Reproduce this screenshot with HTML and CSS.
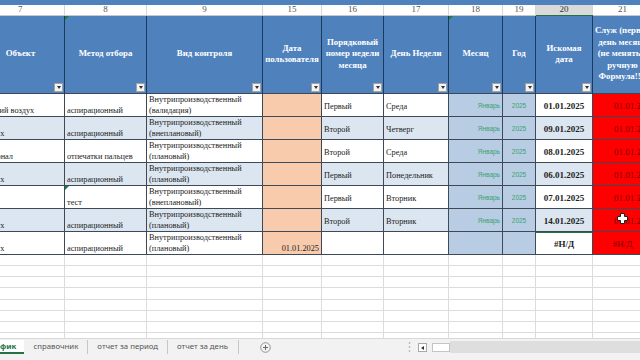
FILE: index.html
```html
<!DOCTYPE html>
<html lang="ru">
<head>
    <meta charset="UTF-8">
    <title>График</title>
    <link rel="stylesheet" href="styles.css">
</head>
<body>
    <div class="sheet">
        <div class="strip"></div>
        <table class="grid">
            <colgroup>
                <col class="w7"><col class="w8"><col class="w9"><col class="w15"><col class="w16">
                <col class="w17"><col class="w18"><col class="w19"><col class="w20"><col class="w21">
            </colgroup>
            <tr class="nums">
                <td>7</td><td>8</td><td>9</td><td>15</td><td>16</td>
                <td>17</td><td>18</td><td>19</td><td class="sel">20</td><td>21</td>
            </tr>
            <tr class="head">
                <th>Объект<span class="filter"></span></th>
                <th class="flag">Метод отбора<span class="filter"></span></th>
                <th>Вид контроля<span class="filter"></span></th>
                <th>Дата<br>пользователя<span class="filter"></span></th>
                <th>Порядковый<br>номер недели<br>месяца<span class="filter"></span></th>
                <th>День Недели<span class="filter"></span></th>
                <th class="flag">Месяц<span class="filter"></span></th>
                <th>Год<span class="filter"></span></th>
                <th>Искомая<br>дата<span class="filter"></span></th>
                <th>Служ (первый<br>день месяца<br>(не менять в<br>ручную<br>Формула!!!)</th>
            </tr>
            <tr class="row">
                <td>Рабочий воздух</td>
                <td>аспирационный</td>
                <td>Внутрипроизводственный<br>(валидация)</td>
                <td class="user"></td>
                <td class="mid">Первый</td>
                <td class="mid">Среда</td>
                <td class="month">Январь</td>
                <td class="year">2025</td>
                <td class="found">01.01.2025</td>
                <td class="serv">01.01.2025</td>
            </tr>
            <tr class="row alt">
                <td>Воздух</td>
                <td>аспирационный</td>
                <td>Внутрипроизводственный<br>(внеплановый)</td>
                <td class="user"></td>
                <td class="mid">Второй</td>
                <td class="mid">Четверг</td>
                <td class="month">Январь</td>
                <td class="year">2025</td>
                <td class="found">09.01.2025</td>
                <td class="serv">01.01.2025</td>
            </tr>
            <tr class="row">
                <td>Персонал</td>
                <td>отпечатки пальцев</td>
                <td>Внутрипроизводственный<br>(плановый)</td>
                <td class="user"></td>
                <td class="mid">Второй</td>
                <td class="mid">Среда</td>
                <td class="month">Январь</td>
                <td class="year">2025</td>
                <td class="found">08.01.2025</td>
                <td class="serv">01.01.2025</td>
            </tr>
            <tr class="row alt">
                <td>Воздух</td>
                <td>аспирационный</td>
                <td>Внутрипроизводственный<br>(плановый)</td>
                <td class="user"></td>
                <td class="mid">Первый</td>
                <td class="mid">Понедельник</td>
                <td class="month">Январь</td>
                <td class="year">2025</td>
                <td class="found">06.01.2025</td>
                <td class="serv">01.01.2025</td>
            </tr>
            <tr class="row">
                <td></td>
                <td class="flag">тест</td>
                <td>Внутрипроизводственный<br>(внеплановый)</td>
                <td class="user"></td>
                <td class="mid">Первый</td>
                <td class="mid">Вторник</td>
                <td class="month">Январь</td>
                <td class="year">2025</td>
                <td class="found">07.01.2025</td>
                <td class="serv">01.01.2025</td>
            </tr>
            <tr class="row alt">
                <td>Воздух</td>
                <td>аспирационный</td>
                <td>Внутрипроизводственный<br>(плановый)</td>
                <td class="user"></td>
                <td class="mid">Второй</td>
                <td class="mid">Вторник</td>
                <td class="month">Январь</td>
                <td class="year">2025</td>
                <td class="found">14.01.2025</td>
                <td class="serv">01.01.2025</td>
            </tr>
            <tr class="row">
                <td>Воздух</td>
                <td>аспирационный</td>
                <td>Внутрипроизводственный<br>(плановый)</td>
                <td class="user">01.01.2025</td>
                <td class="mid"></td>
                <td class="mid"></td>
                <td class="month"></td>
                <td class="year"></td>
                <td class="found active">#Н/Д</td>
                <td class="serv na">#Н/Д</td>
            </tr>
            <tr class="empty"><td></td><td></td><td></td><td></td><td></td><td></td><td></td><td></td><td></td><td></td></tr>
            <tr class="empty"><td></td><td></td><td></td><td></td><td></td><td></td><td></td><td></td><td></td><td></td></tr>
            <tr class="empty"><td></td><td></td><td></td><td></td><td></td><td></td><td></td><td></td><td></td><td></td></tr>
            <tr class="empty"><td></td><td></td><td></td><td></td><td></td><td></td><td></td><td></td><td></td><td></td></tr>
            <tr class="empty"><td></td><td></td><td></td><td></td><td></td><td></td><td></td><td></td><td></td><td></td></tr>
            <tr class="empty"><td></td><td></td><td></td><td></td><td></td><td></td><td></td><td></td><td></td><td></td></tr>
            <tr class="empty"><td></td><td></td><td></td><td></td><td></td><td></td><td></td><td></td><td></td><td></td></tr>
            <tr class="empty"><td></td><td></td><td></td><td></td><td></td><td></td><td></td><td></td><td></td><td></td></tr>
        </table>

        <!-- excel cell cursor -->
        <svg class="cursor" width="11" height="11" viewBox="0 0 11 11">
            <path d="M3.5 0.5h4v3h3v4h-3v3h-4v-3h-3v-4h3z" fill="#fff" stroke="#222" stroke-width="1"/>
        </svg>
    </div>

    <div class="tabbar">
        <div class="tabs">
            <span class="tab active">фик</span>
            <span class="tab">справочник</span>
            <span class="tab">отчет за период</span>
            <span class="tab">отчет за день</span>
            <svg class="add" width="11" height="11" viewBox="0 0 11 11">
                <circle cx="5.5" cy="5.5" r="4.8" fill="none" stroke="#8a8a8a" stroke-width="0.9"/>
                <path d="M5.5 3v5M3 5.5h5" stroke="#6a6a6a" stroke-width="1"/>
            </svg>
        </div>
        <div class="hscroll">
            <svg class="dots" width="3" height="12" viewBox="0 0 3 12">
                <circle cx="1.5" cy="2" r="0.8" fill="#9a9a9a"/>
                <circle cx="1.5" cy="6" r="0.8" fill="#9a9a9a"/>
                <circle cx="1.5" cy="10" r="0.8" fill="#9a9a9a"/>
            </svg>
            <span class="arrow"></span>
            <span class="thumb"></span>
            <span class="track"></span>
        </div>
    </div>
</body>
</html>
```

FILE: styles.css
```css
* {
    margin: 0;
    padding: 0;
    box-sizing: border-box;
}

html, body {
    width: 640px;
    height: 360px;
    overflow: hidden;
    background: #fff;
}

body {
    font-family: "Liberation Serif", serif;
    color: #222;
}

.sheet {
    position: relative;
    height: 338px;
    overflow: hidden;
}

.strip {
    height: 5px;
    background: #4f81bd;
}

.grid {
    border-collapse: collapse;
    table-layout: fixed;
    width: 676px;
    margin-left: -24px;
}

.w7 { width: 88px; }
.w8 { width: 82px; }
.w9 { width: 116px; }
.w15 { width: 59px; }
.w16 { width: 62px; }
.w17 { width: 65px; }
.w18 { width: 54px; }
.w19 { width: 33px; }
.w20 { width: 57px; }
.w21 { width: 60px; }

.grid td, .grid th {
    padding: 0 2px;
    white-space: nowrap;
    font-size: 8.3px;
}

/* column numbers */
.nums td {
    height: 10px;
    line-height: 9px;
    font-size: 9px;
    text-align: center;
    color: #555;
    border-right: 1px solid #d6d6d6;
    border-bottom: 1px solid #c8c8c8;
}

.nums td.sel {
    background: #dadada;
    color: #333;
    border-bottom: 1px solid #217346;
}

/* table header */
.grid .head th {
    position: relative;
    height: 78px;
    background: #4f81bd;
    color: #fff;
    font-weight: bold;
    font-size: 8.8px;
    line-height: 11.5px;
    text-align: center;
    vertical-align: middle;
    border-left: 1px solid #1c3a5e;
    border-right: 1px solid #1c3a5e;
}

.filter {
    position: absolute;
    right: 1px;
    bottom: 1px;
    width: 9px;
    height: 9px;
    background: #f3f3f3;
    border: 1px solid #a2a2a2;
}

.filter::after {
    content: "";
    position: absolute;
    left: 1.5px;
    top: 2.5px;
    border-left: 2.5px solid transparent;
    border-right: 2.5px solid transparent;
    border-top: 3px solid #333;
}

.flag {
    position: relative;
}

.flag::before {
    content: "";
    position: absolute;
    left: 0;
    top: 0;
    border-top: 4px solid #1e7b45;
    border-right: 4px solid transparent;
}

/* data rows */
.row td {
    height: 23px;
    line-height: 11px;
    vertical-align: bottom;
    background: #fff;
    border: 1px solid #3e4957;
}

.row.alt td {
    background: #dce6f1;
}

.row td.mid {
    vertical-align: middle;
    padding-top: 3px;
}

.row td.user {
    background: #f8cbad;
    text-align: right;
}

.row td.month,
.row td.year {
    background: #b8cce4;
    vertical-align: middle;
    font-family: "Liberation Sans", sans-serif;
    font-size: 6.5px;
    color: #3aa36f;
    padding-top: 2px;
}

.row td.month {
    text-align: right;
}

.row td.year {
    text-align: center;
}

.row td.found {
    text-align: center;
    font-weight: bold;
    font-size: 9px;
    vertical-align: middle;
    padding-top: 3px;
}

.row td.active {
    box-shadow: inset 0 1px 0 #217346;
}

.row td.serv {
    background: #ff0000;
    color: #7a0000;
    font-size: 9px;
    vertical-align: middle;
    padding: 3px 0 0 21px;
}

.row td.na {
    padding-left: 0;
    text-align: center;
}

/* empty rows */
.empty td {
    height: 11.25px;
    border: 1px solid #dcdcdc;
}

.cursor {
    position: absolute;
    left: 617px;
    top: 213px;
}

/* sheet tabs */
.tabbar {
    display: flex;
    height: 22px;
    background: #f2f2f2;
    border-top: 1px solid #d8d8d8;
    font-family: "Noto Sans", sans-serif;
    font-size: 7.8px;
    color: #555;
}

.tabs {
    display: flex;
    align-items: flex-start;
    flex: 0 0 405px;
}

.tab {
    margin-top: 1px;
    padding: 0 9px;
    height: 14px;
    line-height: 12px;
    border-right: 1px solid #c6c6c6;
}

.tab.active {
    padding: 0 8px 0 0;
    border-right: none;
    border-bottom: 2px solid #217346;
    color: #217346;
    font-weight: bold;
    background: #fff;
}

.tab:nth-child(4) {
    padding-right: 10px;
}

.add {
    margin: 3px 0 0 21px;
}

.hscroll {
    display: flex;
    align-items: flex-start;
    flex: 1;
    padding-top: 2px;
}

.dots {
    margin: 0 0 0 3px;
}

.arrow {
    position: relative;
    width: 9px;
    height: 9px;
    margin: 2px 0 0 7px;
    background: #fff;
    border: 1px solid #a8a8a8;
}

.arrow::after {
    content: "";
    position: absolute;
    left: 2px;
    top: 1.5px;
    border-top: 2.5px solid transparent;
    border-bottom: 2.5px solid transparent;
    border-right: 3px solid #333;
}

.thumb {
    width: 18px;
    height: 9px;
    margin: 2px 0 0 5px;
    background: #fff;
    border: 1px solid #c4c4c4;
}

.track {
    flex: 1;
    height: 12px;
    background: #dedede;
}
```
